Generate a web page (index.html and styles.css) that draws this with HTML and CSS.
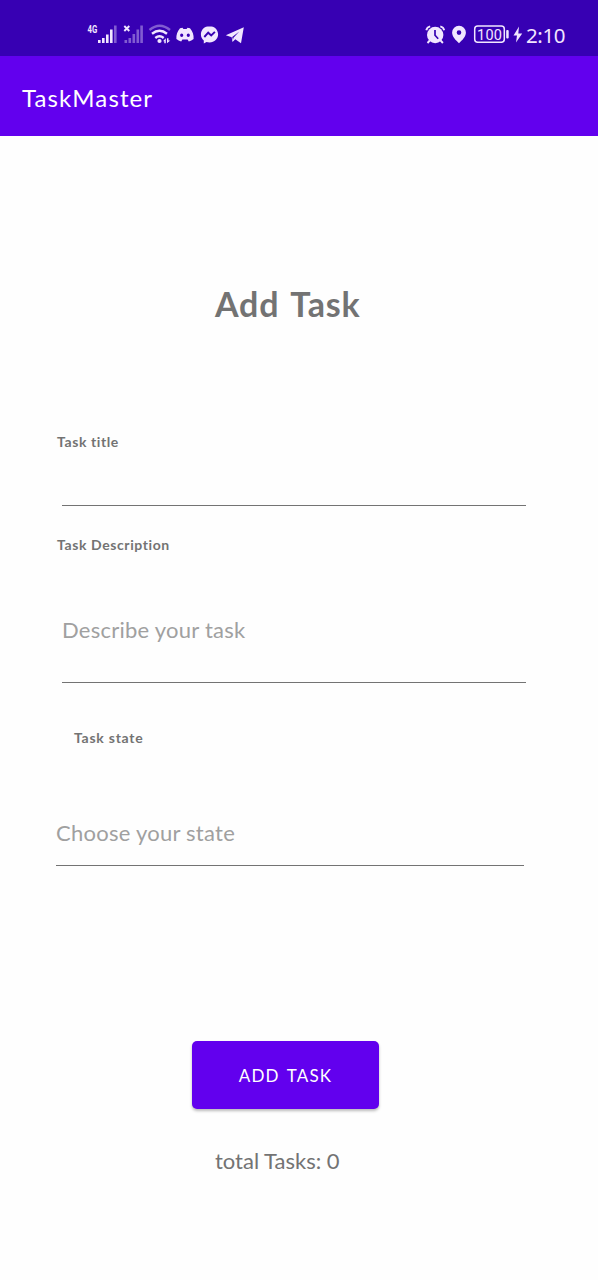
FILE: index.html
```html
<!DOCTYPE html>
<html lang="en">
<head>
<meta charset="utf-8">
<title>TaskMaster</title>
<link rel="stylesheet" href="styles.css">
</head>
<body>
<header class="status">
  <svg class="status-left" width="160" height="24" viewBox="86 22 160 24" fill="#f1e6ff">
    <text class="network" transform="translate(87.500 33) scale(.74 1)">4G</text>
    <path d="M98 40h2.600v3H98zM102 38h2.600v5H102zM106 34.500h2.600V43H106zM110 29.500h2.600V43H110z"/>
    <path opacity=".4" d="M114 25.500h2.600V43H114zM124.500 40h2.600v3h-2.600zM128.500 38h2.600v5h-2.600zM132.500 34h2.600v9h-2.600zM136.500 29.500h2.600V43h-2.600zM140.300 25.500h2.600V43h-2.600z"/>
    <path d="M124.300 26l5 5M129.300 26l-5 5" stroke="#f1e6ff" stroke-width="1.900"/>
    <g fill="none" stroke="#f1e6ff" stroke-width="2.400">
      <path opacity=".4" d="M149.500 30q10.200-8.500 20.500 0"/>
      <path d="M152 33.800q7.500-6 15 0M155.300 38q4.200-3.400 8.400 0"/>
    </g>
    <circle cx="159.500" cy="41" r="2.100"/>
    <path d="M163 41.300l2.800-3v5h-1.500v-2zM167 38.300v5l3.300-2.700h-1.800v-2.300z"/>
    <path fill-rule="evenodd" d="M180 28.300l2.500-.6.900 1.200h3.200l.9-1.200 2.500.6c2.700 3 3.900 6.700 3.600 10.700-1.500 1.300-3 2-4.800 2.400l-1.200-1.900h-5.200l-1.200 1.900c-1.800-.4-3.300-1.100-4.800-2.400-.3-4 .9-7.700 3.600-10.700zM181.700 33.500a1.600 1.800 0 100 3.600 1.600 1.800 0 000-3.600zM188.300 33.500a1.600 1.800 0 100 3.600 1.600 1.800 0 000-3.600z"/>
    <path d="M209.500 26.200c-5 0-8.600 3.500-8.600 8.100 0 2.700 1.100 4.800 2.900 6.200v3l2.700-1.500c1 .3 2 .4 3 .4 5 0 8.600-3.500 8.600-8.100s-3.600-8.100-8.600-8.100z"/>
    <path d="M204.300 37l3.900-4.300 3 2.800 3.700-3.700" fill="none" stroke="#3700b3" stroke-width="1.900"/>
    <path fill-rule="evenodd" d="M243.800 27.200L241 43.200l-5.700-3.900-2.800 2.800-.8-4.800-5.900-2.100zM239.300 31.500l-7.100 5.600.7 3 .6-2.300z"/>
  </svg>
  <svg class="status-right" width="100" height="24" viewBox="424 22 100 24" fill="#f1e6ff">
    <circle cx="435.200" cy="35" r="8.200"/>
    <path d="M426.300 30.200q.7-3 3.900-3.800M440.300 26.400q3.200.8 3.900 3.800M429.800 40.500l-2.300 2.500M440.600 40.500l2.300 2.500" fill="none" stroke="#f1e6ff" stroke-width="1.900"/>
    <path d="M435 30v5.200l3.200 3.500" fill="none" stroke="#3700b3" stroke-width="1.700"/>
    <path fill-rule="evenodd" d="M459 25.800a6.800 6.800 0 00-6.900 6.700c0 4.300 3.700 7.700 6.900 10.700 3.200-3 6.900-6.400 6.900-10.700A6.800 6.800 0 00459 25.800zM459 30.300a2.300 2.300 0 110 4.600 2.300 2.300 0 010-4.600z"/>
    <rect x="474.700" y="26" width="29.600" height="16.200" rx="3" fill="none" stroke="#f1e6ff" stroke-width="1.500"/>
    <text class="battery" x="477" y="39.700" textLength="25">100</text>
    <rect x="506.200" y="30" width="2.500" height="8.500" rx="1"/>
    <path d="M519 26.500L513.500 35.500h3.500l-1 7 6.200-9h-3.900z"/>
  </svg>
  <span class="clock">2:10</span>
</header>
<div class="appbar">TaskMaster</div>
<main class="content">
  <h1 class="heading">Add Task</h1>
  <label class="label title-label">Task title</label>
  <div class="field title-field"></div>
  <label class="label desc-label">Task Description</label>
  <div class="field desc-field"><span class="hint desc-hint">Describe your task</span></div>
  <label class="label state-label">Task state</label>
  <div class="field state-field"><span class="hint state-hint">Choose your state</span></div>
  <button class="add">ADD TASK</button>
  <p class="total">total Tasks: 0</p>
</main>
</body>
</html>
```
FILE: styles.css
```css
* { box-sizing: border-box; }
body {
  margin: 0;
  height: 1280px;
  overflow: hidden;
  background: #fefefe;
  color: #737373;
  font-family: Lato, "Liberation Sans", sans-serif;
}
.status {
  display: flex;
  height: 56px;
  padding: 22px 0 0 86px;
  background: #3700b3;
  color: #f1e6ff;
}
.status-left { flex: none; }
.status-right { flex: none; margin-left: 178px; }
.network { font: bold 10.5px Roboto, sans-serif; }
.battery { font: 14.5px Roboto, sans-serif; }
.clock {
  margin-left: 2px;
  font-family: "Noto Sans", sans-serif;
  font-size: 20.5px;
  line-height: 27px;
  letter-spacing: -.4px;
}
.appbar {
  height: 80px;
  padding-left: 22px;
  background: #6200ee;
  color: #fff;
  font-size: 24px;
  line-height: 83px;
  letter-spacing: 1.1px;
}
.content {
  display: flex;
  flex-direction: column;
  align-items: flex-start;
  padding: 147px 0 0 56px;
}
.heading {
  margin: 0 0 109px 159px;
  font-size: 34px;
  line-height: 41px;
  height: 40px;
  letter-spacing: .8px;
  word-spacing: 3px;
}
.label {
  padding-left: 1px;
  font-size: 14px;
  font-weight: 700;
  line-height: 20px;
  letter-spacing: .6px;
}
.field {
  width: 464px;
  margin-left: 6px;
  border-bottom: 1px solid #737373;
}
.title-field { height: 54px; margin-bottom: 29px; }
.desc-field { height: 128px; padding-top: 60px; margin-bottom: 45px; }
.state-label { margin-left: 17px; letter-spacing: .75px; }
.state-field { width: 468px; height: 118px; margin-left: 0; padding-top: 70px; }
.hint {
  display: block;
  color: #a0a0a0;
  font-size: 22px;
  line-height: 30px;
  letter-spacing: .25px;
}
.add {
  width: 187px;
  height: 68px;
  margin: 175px 0 0 136px;
  padding: 0;
  border: 0;
  border-radius: 5px;
  background: #6200ee;
  box-shadow: 0 2px 3px #0004;
  color: #fff;
  font: 17px Lato, sans-serif;
  letter-spacing: 1.2px;
  word-spacing: 2px;
}
.total {
  margin: 37px 0 0 159px;
  font-size: 22px;
  line-height: 30px;
}
```
